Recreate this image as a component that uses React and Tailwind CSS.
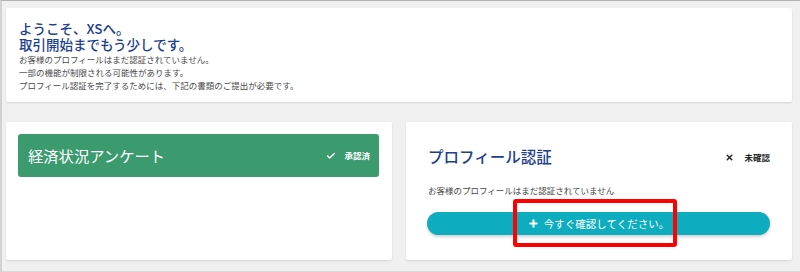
import { Check, X, Plus } from "lucide-react";

const font = { fontFamily: '"Noto Sans CJK JP", "Noto Sans", sans-serif' };

export default function App() {
  return (
    <div
      style={font}
      className="w-[800px] h-[272px] overflow-hidden bg-[#f0f0f0] border-t border-t-[#b3b3b3] border-l-2 border-l-[#d2d2d2] border-b border-b-[#d8d8d8] pt-[7px] pl-[4px] pr-[8px]"
    >
      {/* welcome card */}
      <div className="h-[94px] bg-white rounded-[2px] shadow-[0_1px_2px_rgba(0,0,0,0.12)] pl-[13px] pt-[12px]">
        <div className="text-[13.5px] font-medium text-[#1d3f8e]">
          <div className="h-[16px] leading-[16px]">ようこそ、XSへ。</div>
          <div className="h-[16px] leading-[16px]">取引開始までもう少しです。</div>
        </div>
        <p className="mt-[1px] text-[8.5px] leading-[13px] text-[#4a4a4a]">
          お客様のプロフィールはまだ認証されていません。
          <br />
          一部の機能が制限される可能性があります。
          <br />
          プロフィール認証を完了するためには、下記の書類のご提出が必要です。
        </p>
      </div>

      <div className="mt-[20px] flex gap-[14px]">
        {/* survey card */}
        <div className="w-[386px] h-[138px] bg-white rounded-[2px] shadow-[0_1px_2px_rgba(0,0,0,0.12)] pt-[12px] pl-[12px] pr-[13px]">
          <div className="h-[43px] rounded-[3px] bg-[#3c9a6f] flex items-center justify-between pl-[10px] pr-[9px]">
            <span className="text-[15.3px] text-white">経済状況アンケート</span>
            <span className="flex items-center gap-[8px] text-white text-[8.5px] font-bold">
              <Check size={10} strokeWidth={3.5} />
              承認済
            </span>
          </div>
        </div>

        {/* profile card */}
        <div className="w-[386px] h-[138px] bg-white rounded-[2px] shadow-[0_1px_2px_rgba(0,0,0,0.12)] pt-[25px] pl-[22px] pr-[22px]">
          <div className="flex items-center justify-between h-[20px]">
            <span className="text-[15.5px] font-medium text-[#1d3f8e]">プロフィール認証</span>
            <span className="flex items-center gap-[10px] text-[8.5px] font-bold text-[#222]">
              <X size={9} strokeWidth={4} />
              未確認
            </span>
          </div>
          <p className="mt-[17px] text-[8.5px] leading-[13px] text-[#444]">
            お客様のプロフィールはまだ認証されていません
          </p>
          <div className="relative mt-[15px] -ml-[1px]">
            <button className="w-full h-[23px] rounded-full bg-[#0eacbf] shadow-[0_2px_3px_rgba(0,0,0,0.18)] flex items-center justify-center gap-[5px] text-white text-[10.5px]">
              <Plus size={11} strokeWidth={4.5} />
              今すぐ確認してください。
            </button>
            <div className="absolute left-[86px] top-[-13px] w-[164px] h-[48px] border-[4px] border-[#ff0000] rounded-[3px]" />
          </div>
        </div>
      </div>
    </div>
  );
}
